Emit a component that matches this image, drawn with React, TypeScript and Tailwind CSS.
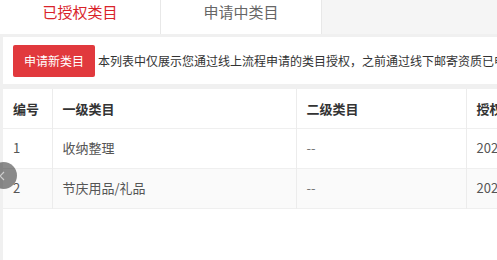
import React from 'react';

const rows = [
  { id: '1', first: '收纳整理', second: '--', date: '2021-03-18 10:22:15' },
  { id: '2', first: '节庆用品/礼品', second: '--', date: '2021-03-18 10:22:15' },
];

const App: React.FC = () => {
  return (
    <div
      className="relative h-[260px] w-[497px] overflow-hidden bg-[#f0f0f0]"
      style={{ fontFamily: '"Noto Sans CJK SC", "Noto Sans", sans-serif' }}
    >
      {/* Tabs */}
      <div className="flex h-[34px] bg-[#f5f5f5]">
        <div className="w-[161px] border-r border-[#e8e8e8] bg-white text-center text-[15px] leading-[24px] text-[#d9232a]">
          已授权类目
        </div>
        <div className="w-[161px] border-r border-[#e8e8e8] bg-white text-center text-[15px] leading-[24px] text-[#666]">
          申请中类目
        </div>
      </div>

      {/* Toolbar */}
      <div className="ml-[3px] mt-[3px] flex h-[47px] items-center overflow-hidden whitespace-nowrap bg-white pl-[10px]">
        <button className="h-[32px] shrink-0 rounded-[2px] bg-[#e1393d] px-[11px] text-[12px] text-white">
          申请新类目
        </button>
        <span className="ml-[3px] text-[12px] text-[#333]">
          本列表中仅展示您通过线上流程申请的类目授权，之前通过线下邮寄资质已申请的类目请联系招商经理查询
        </span>
      </div>

      {/* Table */}
      <div className="ml-[3px] mt-[5px] h-[200px] overflow-hidden bg-white">
        <table className="w-[640px] table-fixed border-collapse text-[13px]">
          <colgroup>
            <col className="w-[49px]" />
            <col className="w-[244px]" />
            <col className="w-[170px]" />
            <col className="w-[177px]" />
          </colgroup>
          <thead>
            <tr className="h-[39px] border-b border-[#efefef] text-left font-bold text-[#333]">
              <th className="border-r border-[#ececec] pl-[10px] font-bold">编号</th>
              <th className="border-r border-[#ececec] pl-[10px] font-bold">一级类目</th>
              <th className="border-r border-[#ececec] pl-[10px] font-bold">二级类目</th>
              <th className="whitespace-nowrap pl-[10px] font-bold">授权时间</th>
            </tr>
          </thead>
          <tbody>
            {rows.map((r, i) => (
              <tr
                key={r.id}
                className={`h-[40px] border-b border-[#efefef] text-[#555] ${i % 2 === 1 ? 'bg-[#fafafa]' : 'bg-white'}`}
              >
                <td className="border-r border-[#ececec] pl-[10px]">{r.id}</td>
                <td className="border-r border-[#ececec] pl-[10px]">{r.first}</td>
                <td className="border-r border-[#ececec] pl-[10px] text-[#777]">{r.second}</td>
                <td className="whitespace-nowrap pl-[10px]">{r.date}</td>
              </tr>
            ))}
          </tbody>
        </table>
      </div>

      {/* Floating side toggle */}
      <div className="absolute left-[-10px] top-[162px] flex h-[27px] w-[27px] items-center justify-end rounded-full bg-black/45 pr-[12px]">
        <svg width="6" height="10" viewBox="0 0 6 10" fill="none">
          <path d="M5 1L1 5l4 4" stroke="rgba(255,255,255,0.6)" strokeWidth="1.2" />
        </svg>
      </div>
    </div>
  );
};

export default App;
